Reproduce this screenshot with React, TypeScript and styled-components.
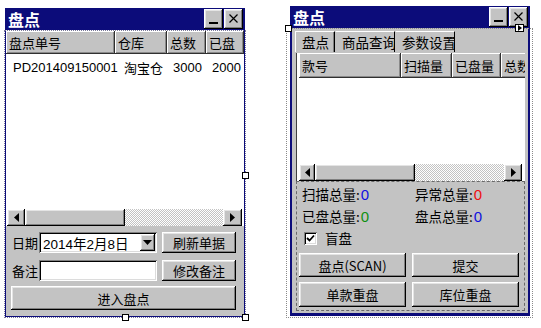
import styled, { createGlobalStyle } from "styled-components"

const NAVY = "#0c0c7a"
const FACE = "#c3c3c3"

const raised = `box-shadow: inset -1px -1px #000, inset 1px 1px #fff, inset -2px -2px #808080, inset 2px 2px #e4e4e4;`
const sunken = `box-shadow: inset 1px 1px #808080, inset -1px -1px #fff, inset 2px 2px #000, inset -2px -2px #dcdcdc;`

const GlobalStyle = createGlobalStyle`
  html, body {
    margin: 0;
    padding: 0;
    background: #ffffff;
  }
  body {
    font-family: "Liberation Sans", "Noto Sans CJK SC", sans-serif;
    font-size: 13px;
    color: #000;
  }
  * {
    box-sizing: border-box;
  }
`

const Page = styled.div`
  width: 541px;
  height: 328px;
  display: flex;
  align-items: flex-start;
  padding: 6px 0 0 5px;
  gap: 45px;
  overflow: hidden;
`

const Window = styled.div<{ $top: number; $height: number; $framed?: boolean }>`
  position: relative;
  width: 240px;
  height: ${({ $height }) => $height}px;
  margin-top: ${({ $top }) => $top}px;
  display: flex;
  flex-direction: column;
  background: ${({ $framed }) => ($framed ? NAVY : "transparent")};
`

const TitleBar = styled.div`
  height: 22px;
  flex: none;
  background: ${NAVY};
  display: flex;
  align-items: center;
  gap: 1px;
  padding: 0 2px 0 3px;
`

const Title = styled.span`
  flex: 1;
  color: #ffffff;
  font-family: "Noto Sans CJK SC", sans-serif;
  font-weight: 700;
  font-size: 16px;
  line-height: 22px;
`

const CaptionButton = styled.div`
  width: 19px;
  height: 20px;
  background: ${FACE};
  ${raised}
  display: flex;
  align-items: center;
  justify-content: center;
`

const LeftClient = styled.div`
  flex: 1;
  display: flex;
  flex-direction: column;
  border: 1px solid ${NAVY};
  border-top: none;
  background: #ffffff;
`

const RightClient = styled.div`
  flex: 1;
  display: flex;
  flex-direction: column;
  margin: 0 2px 3px 2px;
  background: ${FACE};
`

const ListView = styled.div<{ $inset?: boolean }>`
  flex: 1;
  display: flex;
  flex-direction: column;
  background: #ffffff;
  margin: ${({ $inset }) => ($inset ? "1px 3px 0 4px" : "1px 0 0 0")};
  padding: ${({ $inset }) => ($inset ? "0 0 0 2px" : "0")};
  border-left: ${({ $inset }) => ($inset ? "1px solid #404040" : "none")};
  overflow: hidden;
`

const HeaderRow = styled.div<{ $h: number }>`
  height: ${({ $h }) => $h}px;
  flex: none;
  display: flex;
  overflow: hidden;
`

const HeaderCell = styled.div<{ $w: number }>`
  width: ${({ $w }) => $w}px;
  flex: none;
  height: 100%;
  background: ${FACE};
  box-shadow: inset -1px -1px #303030, inset 1px 1px #ffffff, inset -2px -2px #8a8a8a;
  font-family: "Noto Sans CJK SC", sans-serif;
  font-size: 13px;
  display: flex;
  align-items: center;
  padding-left: 3px;
  white-space: nowrap;
  overflow: hidden;
`

const DataRow = styled.div`
  height: 22px;
  margin-top: 2px;
  display: flex;
  align-items: center;
`

const DataCell = styled.div<{ $w: number; $right?: boolean; $pad: number }>`
  width: ${({ $w }) => $w}px;
  flex: none;
  text-align: ${({ $right }) => ($right ? "right" : "left")};
  padding: ${({ $right, $pad }) => ($right ? `0 ${$pad}px 0 0` : `0 0 0 ${$pad}px`)};
  font-size: 13px;
  white-space: nowrap;
`

const ListBody = styled.div`
  flex: 1;
`

const HScroll = styled.div<{ $h: number; $inset?: boolean }>`
  height: ${({ $h }) => $h}px;
  flex: none;
  display: flex;
  margin: ${({ $inset }) => ($inset ? "0 3px 0 0" : "0 2px 0 1px")};
`

const ArrowButton = styled.div<{ $w: number }>`
  width: ${({ $w }) => $w}px;
  flex: none;
  background: ${FACE};
  ${raised}
  display: flex;
  align-items: center;
  justify-content: center;
`

const Thumb = styled.div`
  width: 100px;
  flex: none;
  background: ${FACE};
  ${raised}
`

const Track = styled.div`
  flex: 1;
  background-color: #ffffff;
  background-image: conic-gradient(${FACE} 25%, #ffffff 0 50%, ${FACE} 0 75%, #ffffff 0);
  background-size: 2px 2px;
`

const FormPanel = styled.div`
  height: 90px;
  flex: none;
  background: ${FACE};
  padding: 6px 8px 6px 6px;
  display: flex;
  flex-direction: column;
`

const FieldRow = styled.div<{ $gap: number }>`
  height: 21px;
  display: flex;
  align-items: center;
  margin-bottom: ${({ $gap }) => $gap}px;
`

const FieldLabel = styled.span`
  width: 27px;
  flex: none;
  font-family: "Noto Sans CJK SC", sans-serif;
  font-size: 13px;
`

const TextBox = styled.div`
  width: 118px;
  height: 21px;
  flex: none;
  background: #ffffff;
  ${sunken}
  display: flex;
  align-items: center;
  padding-left: 4px;
  font-size: 13.5px;
  font-family: "Liberation Sans", "Noto Sans CJK SC", sans-serif;
  white-space: nowrap;
`

const ComboText = styled.span`
  flex: 1;
`

const DropButton = styled.div`
  width: 15px;
  height: 17px;
  margin-right: 2px;
  background: ${FACE};
  ${raised}
  display: flex;
  align-items: center;
  justify-content: center;
`

const PushButton = styled.div<{ $w?: number; $h: number }>`
  width: ${({ $w }) => ($w ? `${$w}px` : "auto")};
  height: ${({ $h }) => $h}px;
  background: ${FACE};
  ${raised}
  display: flex;
  align-items: center;
  justify-content: center;
  font-family: "Noto Sans CJK SC", sans-serif;
  font-size: 13px;
  white-space: nowrap;
`

const WideButton = styled(PushButton)`
  margin-left: -1px;
`

const FieldButton = styled(PushButton)`
  margin-left: 5px;
`

const TabStrip = styled.div`
  height: 24px;
  flex: none;
  display: flex;
  align-items: flex-end;
  padding-left: 3px;
`

const Tab = styled.div<{ $w: number; $active?: boolean }>`
  width: ${({ $w }) => $w}px;
  height: 21px;
  flex: none;
  border-top: 1px solid #ffffff;
  border-left: 1px solid ${({ $active }) => ($active ? "#ffffff" : FACE)};
  border-right: 1px solid #000000;
  box-shadow: ${({ $active }) => ($active ? "inset -1px 0 #808080" : "none")};
  padding-left: 6px;
  font-family: "Noto Sans CJK SC", sans-serif;
  font-size: 13.5px;
  line-height: 20px;
  white-space: nowrap;
  overflow: hidden;
`

const StatsPanel = styled.div`
  height: 130px;
  flex: none;
  margin: 0 3px 2px 4px;
  border: 1px dashed #6a6a6a;
  padding: 1px 5px 3px 2px;
  display: flex;
  flex-direction: column;
`

const StatGrid = styled.div`
  display: grid;
  grid-template-columns: 113px 1fr;
  grid-auto-rows: 22px;
  padding-left: 3px;
`

const Stat = styled.div`
  display: flex;
  align-items: center;
  font-family: "Noto Sans CJK SC", sans-serif;
  font-size: 13.5px;
`

const StatValue = styled.span<{ $color: string }>`
  color: ${({ $color }) => $color};
  font-family: "Liberation Sans", sans-serif;
  font-size: 15px;
  margin-left: 1px;
`

const CheckRow = styled.div`
  height: 22px;
  display: flex;
  align-items: center;
  gap: 8px;
  padding-left: 5px;
  font-family: "Noto Sans CJK SC", sans-serif;
  font-size: 13.5px;
`

const CheckBox = styled.div`
  width: 13px;
  height: 13px;
  background: #ffffff;
  ${sunken}
  display: flex;
  align-items: center;
  justify-content: center;
`

const ButtonGrid = styled.div`
  margin-top: 4px;
  display: grid;
  grid-template-columns: 107px 107px;
  grid-template-rows: 24px 25px;
  gap: 5px 6px;
`

const Selection = styled.div<{ $inset: string; $color: string }>`
  position: absolute;
  inset: ${({ $inset }) => $inset};
  border: 1px dotted ${({ $color }) => $color};
  pointer-events: none;
`

const Handle = styled.div<{ $x: number; $y: number }>`
  position: absolute;
  left: ${({ $x }) => $x - 3}px;
  top: ${({ $y }) => $y - 3}px;
  width: 7px;
  height: 7px;
  background: #ffffff;
  border: 1px solid #000000;
`

const Cursor = styled.div`
  position: absolute;
  left: 225px;
  top: 18px;
  width: 9px;
  height: 8px;
  background: #ffffff;
  border: 1px solid #000;
  display: flex;
  align-items: center;
  justify-content: center;
`

function MinimizeIcon() {
  return (
    <svg width="19" height="20" viewBox="0 0 19 20">
      <rect x="5" y="13" width="9" height="2" fill="#000" />
    </svg>
  )
}

function CloseIcon() {
  return (
    <svg width="19" height="20" viewBox="0 0 19 20">
      <path d="M5.5 5.5 L13.5 13.5 M13.5 5.5 L5.5 13.5" stroke="#000" strokeWidth="1.2" />
    </svg>
  )
}

function Arrow({ dir }: { dir: "left" | "right" | "down" }) {
  if (dir === "down") {
    return (
      <svg width="9" height="5" viewBox="0 0 9 5">
        <polygon points="0,0 9,0 4.5,5" fill="#000" />
      </svg>
    )
  }
  return (
    <svg width="5" height="9" viewBox="0 0 5 9">
      <polygon points={dir === "left" ? "5,0 5,9 0,4.5" : "0,0 0,9 5,4.5"} fill="#000" />
    </svg>
  )
}

function Check() {
  return (
    <svg width="9" height="9" viewBox="0 0 9 9">
      <path d="M1 4 L3.5 6.5 L8 1.5" stroke="#000" strokeWidth="1.8" fill="none" />
    </svg>
  )
}

function Caption({ title }: { title: string }) {
  return (
    <TitleBar>
      <Title>{title}</Title>
      <CaptionButton>
        <MinimizeIcon />
      </CaptionButton>
      <CaptionButton>
        <CloseIcon />
      </CaptionButton>
    </TitleBar>
  )
}

function OrderWindow() {
  return (
    <Window $top={2} $height={309}>
      <Caption title="盘点" />
      <LeftClient>
        <ListView>
          <HeaderRow $h={23}>
            <HeaderCell $w={109}>盘点单号</HeaderCell>
            <HeaderCell $w={52}>仓库</HeaderCell>
            <HeaderCell $w={39}>总数</HeaderCell>
            <HeaderCell $w={38}>已盘</HeaderCell>
          </HeaderRow>
          <DataRow>
            <DataCell $w={109} $pad={7}>PD201409150001</DataCell>
            <DataCell $w={52} $pad={9}>淘宝仓</DataCell>
            <DataCell $w={39} $right $pad={4}>3000</DataCell>
            <DataCell $w={38} $right $pad={3}>2000</DataCell>
          </DataRow>
          <ListBody />
          <HScroll $h={17}>
            <ArrowButton $w={18}>
              <Arrow dir="left" />
            </ArrowButton>
            <Thumb />
            <Track />
            <ArrowButton $w={19}>
              <Arrow dir="right" />
            </ArrowButton>
          </HScroll>
        </ListView>
        <FormPanel>
          <FieldRow $gap={7}>
            <FieldLabel>日期</FieldLabel>
            <TextBox>
              <ComboText>2014年2月8日</ComboText>
              <DropButton>
                <Arrow dir="down" />
              </DropButton>
            </TextBox>
            <FieldButton $w={74} $h={21}>刷新单据</FieldButton>
          </FieldRow>
          <FieldRow $gap={5}>
            <FieldLabel>备注</FieldLabel>
            <TextBox />
            <FieldButton $w={74} $h={21}>修改备注</FieldButton>
          </FieldRow>
          <WideButton $h={24}>进入盘点</WideButton>
        </FormPanel>
      </LeftClient>
      <Selection $inset="22px -1px -1px -1px" $color="#7a7a9a" />
      <Handle $x={240} $y={167} />
      <Handle $x={120} $y={309} />
      <Handle $x={240} $y={309} />
    </Window>
  )
}

function CountWindow() {
  const stats = [
    { label: "扫描总量:", color: "#1010e0" },
    { label: "异常总量:", color: "#ee1010" },
    { label: "已盘总量:", color: "#109010" },
    { label: "盘点总量:", color: "#1010e0" },
  ]
  return (
    <Window $top={0} $height={310} $framed>
      <Caption title="盘点" />
      <RightClient>
        <TabStrip>
          <Tab $w={40} $active>
            盘点
          </Tab>
          <Tab $w={60}>商品查询</Tab>
          <Tab $w={60}>参数设置</Tab>
        </TabStrip>
        <ListView $inset>
          <HeaderRow $h={25}>
            <HeaderCell $w={102}>款号</HeaderCell>
            <HeaderCell $w={51}>扫描量</HeaderCell>
            <HeaderCell $w={49}>已盘量</HeaderCell>
            <HeaderCell $w={40}>总数</HeaderCell>
          </HeaderRow>
          <ListBody />
          <HScroll $h={17} $inset>
            <ArrowButton $w={16}>
              <Arrow dir="left" />
            </ArrowButton>
            <Thumb />
            <Track />
            <ArrowButton $w={18}>
              <Arrow dir="right" />
            </ArrowButton>
          </HScroll>
        </ListView>
        <StatsPanel>
          <StatGrid>
            {stats.map((s) => (
              <Stat key={s.label}>
                {s.label}
                <StatValue $color={s.color}>0</StatValue>
              </Stat>
            ))}
          </StatGrid>
          <CheckRow>
            <CheckBox>
              <Check />
            </CheckBox>
            盲盘
          </CheckRow>
          <ButtonGrid>
            <PushButton $h={24}>盘点(SCAN)</PushButton>
            <PushButton $h={24}>提交</PushButton>
            <PushButton $h={25}>单款重盘</PushButton>
            <PushButton $h={25}>库位重盘</PushButton>
          </ButtonGrid>
        </StatsPanel>
      </RightClient>
      <Selection $inset="22px -3px -2px -4px" $color="#8a8a8a" />
      <Handle $x={-2} $y={22} />
      <Cursor>
        <svg width="4" height="6" viewBox="0 0 4 6">
          <polygon points="0,0 0,6 4,3" fill="#000" />
        </svg>
      </Cursor>
    </Window>
  )
}

export default function App() {
  return (
    <>
      <GlobalStyle />
      <Page>
        <OrderWindow />
        <CountWindow />
      </Page>
    </>
  )
}
